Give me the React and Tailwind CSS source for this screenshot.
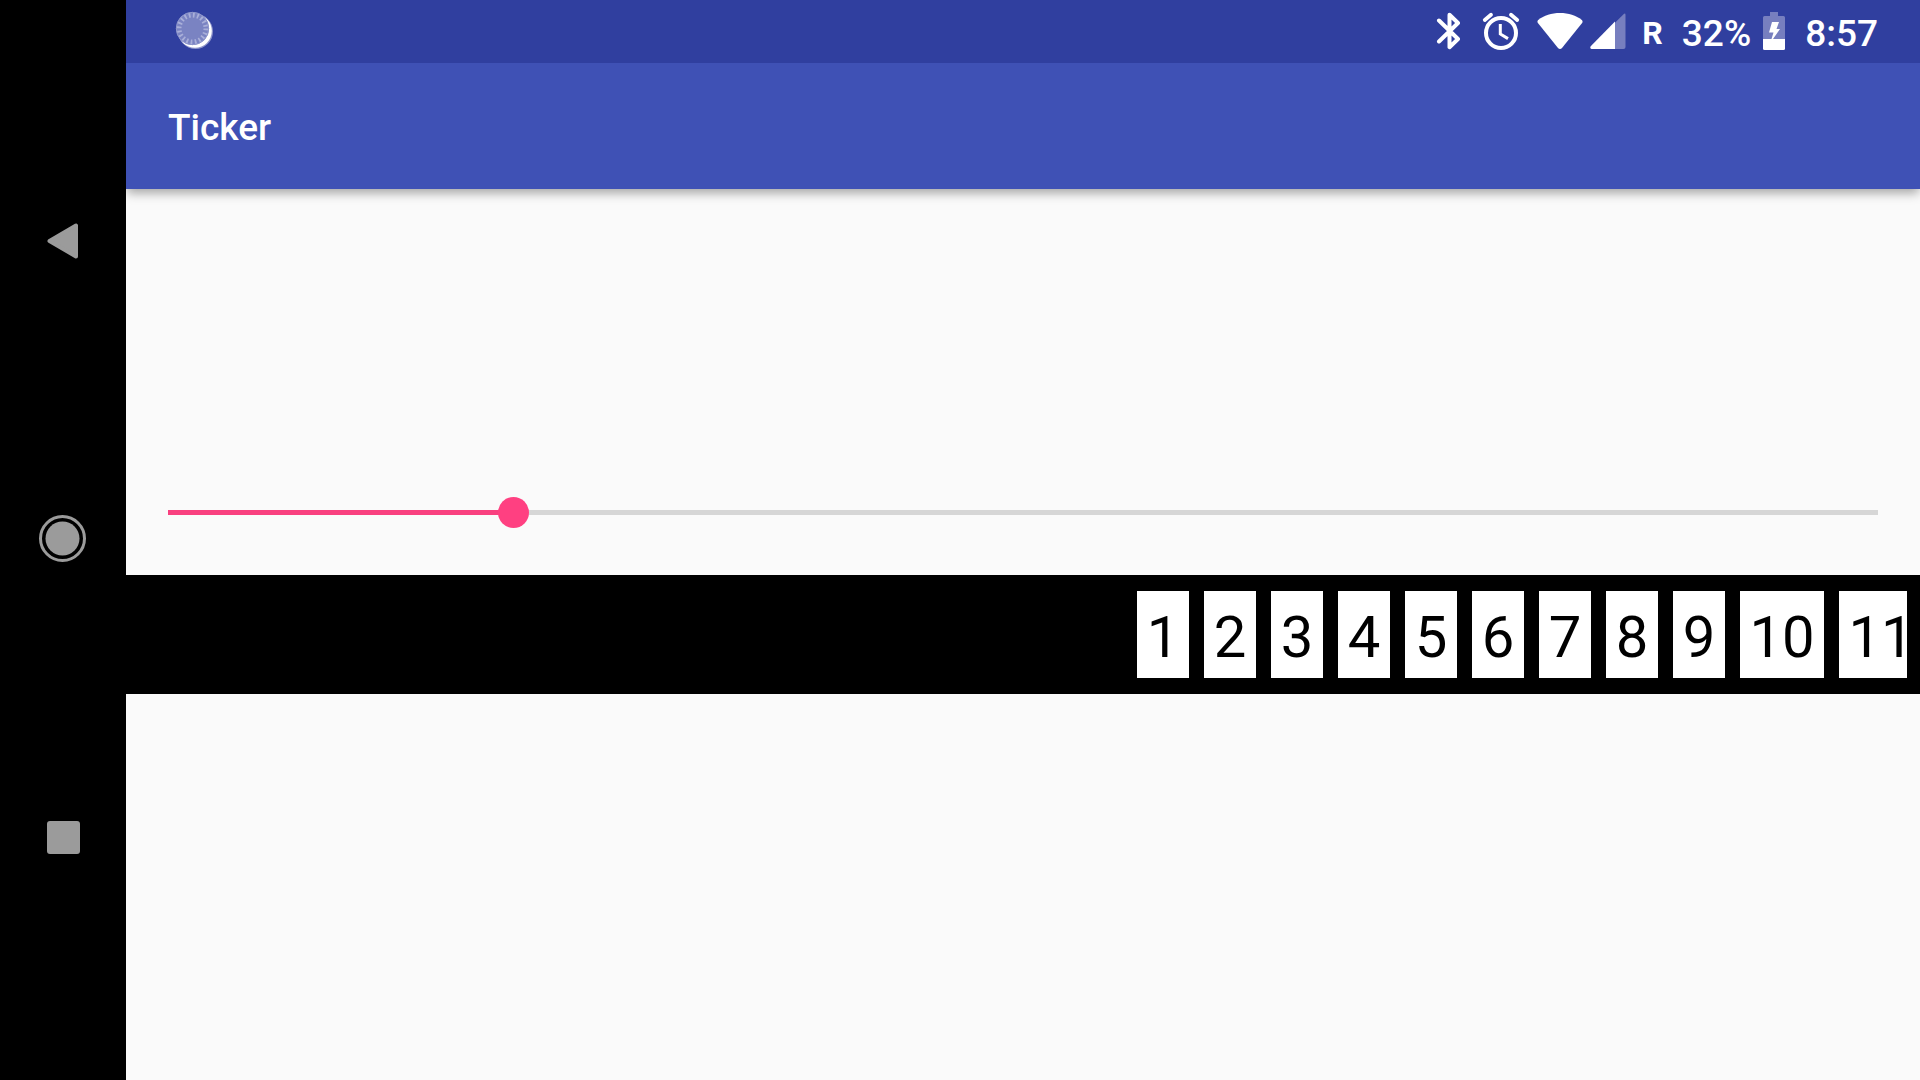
import { useState } from "react";

function LoadingDisc() {
  return (
    <svg viewBox="0 0 40 40" className="size-10" aria-hidden="true">
      <circle cx="20.5" cy="20.5" r="17.500" fill="#8d94cb" />
      <circle cx="20" cy="20" r="16.800" fill="#ffffff" />
      <circle cx="17.500" cy="17.500" r="16.500" fill="#7a83c2" />
      <circle
        cx="17.500"
        cy="17.500"
        r="13.500"
        fill="none"
        stroke="#a9afd9"
        strokeWidth="5"
        strokeDasharray="1.8 2.441"
      />
      <circle cx="17.500" cy="17.500" r="16.200" fill="none" stroke="#8f97cc" strokeWidth="1" />
    </svg>
  );
}

function BluetoothIcon() {
  return (
    <svg viewBox="0 0 26 38" className="h-[38px] w-[26px]" fill="none" aria-hidden="true">
      <path
        d="M3 8.5 L22 27 L13.5 35.2 V2.8 L22 11 L3 29.5"
        stroke="#ffffff"
        strokeWidth="4"
        strokeLinejoin="round"
        strokeLinecap="round"
      />
    </svg>
  );
}

function AlarmIcon() {
  return (
    <svg viewBox="0 0 38 38" className="size-[38px]" fill="none" stroke="#ffffff" aria-hidden="true">
      <circle cx="19" cy="21" r="15" strokeWidth="4" />
      <path d="M2.8 8 L9 2.800 M35.2 8 L29 2.800" strokeWidth="3.8" strokeLinecap="round" />
      <path d="M18.3 12 V22 L26 26.600" strokeWidth="3" />
    </svg>
  );
}

function WifiIcon() {
  return (
    <svg viewBox="0 0 46 38" className="h-[38px] w-[46px]" fill="#ffffff" aria-hidden="true">
      <path d="M1.2 8 C7 3.2 14.5 1 23 1 C31.5 1 39 3.2 44.8 8 C45.8 8.9 45.8 9.9 45.1 10.9 L25 36 C23.8 37.4 22.2 37.4 21 36 L0.9 10.9 C0.2 9.9 0.2 8.9 1.2 8 Z" />
    </svg>
  );
}

function SignalIcon() {
  return (
    <svg viewBox="0 0 36 36" className="size-9" aria-hidden="true">
      <path d="M25 9.7 L33.8 0.9 Q35.5 0 35.5 2 V34 Q35.5 36 33.5 36 H25 Z" fill="#777fbf" />
      <path d="M25 8.5 V36 H1.5 Q-0.5 35.5 0.7 33.3 Z" fill="#ffffff" />
    </svg>
  );
}

function BatteryIcon() {
  return (
    <svg viewBox="0 0 22 38" className="h-[38px] w-[22px]" aria-hidden="true">
      <path d="M7 0 H15 V4 H20.5 Q22 4 22 5.5 V27 H0 V5.5 Q0 4 1.5 4 H7 Z" fill="#777fbf" />
      <path d="M0 27 H22 V36.5 Q22 38 20.5 38 H1.5 Q0 38 0 36.5 Z" fill="#ffffff" />
      <path d="M9 10 H16 L13.5 17 H17 L10 27 H8.5 L10.5 20.5 H6 Z" fill="#ffffff" />
    </svg>
  );
}

function StatusBar() {
  return (
    <div className="flex h-[63px] items-center justify-between bg-[#303f9f] pr-[42px] pb-px pl-[49px] text-[37px] leading-none font-medium">
      <LoadingDisc />
      <div className="flex items-center">
        <BluetoothIcon />
        <div className="ml-5">
          <AlarmIcon />
        </div>
        <div className="ml-[17px]">
          <WifiIcon />
        </div>
        <div className="ml-[7px]">
          <SignalIcon />
        </div>
        <span className="ml-4 pt-[3px] text-[32px] font-bold">R</span>
        <span className="ml-[19px] pt-1">32%</span>
        <div className="ml-3">
          <BatteryIcon />
        </div>
        <time className="ml-5 pt-1">8:57</time>
      </div>
    </div>
  );
}

function NavigationBar() {
  const button = "flex w-full flex-1 items-center justify-center";
  return (
    <nav className="flex w-[126px] shrink-0 flex-col bg-black pt-[92px] pb-[93px]">
      <button type="button" aria-label="Back" className={button}>
        <svg viewBox="0 0 32 36" className="h-9 w-8" aria-hidden="true">
          <path
            d="M2.5 18 L29 2.5 V33.5 Z"
            fill="#9b9b9b"
            stroke="#9b9b9b"
            strokeWidth="4"
            strokeLinejoin="round"
          />
        </svg>
      </button>
      <button type="button" aria-label="Home" className={button}>
        <svg viewBox="0 0 48 48" className="size-12" aria-hidden="true">
          <circle cx="23.5" cy="23.5" r="22" fill="none" stroke="#9b9b9b" strokeWidth="3" />
          <circle cx="23.5" cy="23.5" r="17" fill="#9b9b9b" />
        </svg>
      </button>
      <button type="button" aria-label="Recent apps" className={button}>
        <span className="size-[33px] rounded-[3px] bg-[#9b9b9b]" />
      </button>
    </nav>
  );
}

const MAX = 99;

function PositionSlider() {
  const [value, setValue] = useState(20);
  return (
    <div className="relative mx-[42px] mb-[47px] flex h-[31px] items-center">
      <div className="h-[5px] w-full bg-[#d6d6d6]">
        <div className="h-full bg-[#f9407f]" style={{ width: `${(value / MAX) * 100}%` }} />
      </div>
      <input
        type="range"
        aria-label="Ticker position"
        min="0"
        max={MAX}
        value={value}
        onChange={(event) => setValue(Number(event.target.value))}
        className="absolute inset-y-0 -right-[15px] -left-[15px] cursor-pointer appearance-none bg-transparent outline-none [&::-webkit-slider-thumb]:size-[31px] [&::-webkit-slider-thumb]:appearance-none [&::-webkit-slider-thumb]:rounded-full [&::-webkit-slider-thumb]:bg-[#ff4081]"
      />
    </div>
  );
}

const numbers = [1, 2, 3, 4, 5, 6, 7, 8, 9, 10, 11];

function TickerStrip() {
  return (
    <div className="bg-black px-[13px] py-4">
      <ul className="ml-auto flex w-[770px] max-w-full gap-[15px] overflow-hidden">
        {numbers.map((number) => (
          <li
            key={number}
            className={`flex h-[87px] shrink-0 items-center justify-center bg-white pt-1 text-[58px] leading-none text-black ${
              number < 10 ? "w-[52px]" : "w-[84px]"
            }`}
          >
            {number}
          </li>
        ))}
      </ul>
    </div>
  );
}

export default function App() {
  return (
    <div className="flex min-h-screen bg-[#fafafa] font-[Roboto,sans-serif] text-white">
      <NavigationBar />
      <div className="flex min-w-0 flex-1 flex-col">
        <StatusBar />
        <header className="z-10 flex h-[126px] items-center bg-[#3f51b5] px-[42px] shadow-[0_5px_10px_-1px_rgba(0,0,0,0.35)] [clip-path:inset(0_0_-30px_0)]">
          <h1 className="pt-[3px] text-[37px] leading-none font-medium">Ticker</h1>
        </header>
        <main className="grid flex-1 grid-rows-[1fr_auto_1fr]">
          <div className="flex flex-col justify-end">
            <PositionSlider />
          </div>
          <TickerStrip />
        </main>
      </div>
    </div>
  );
}
